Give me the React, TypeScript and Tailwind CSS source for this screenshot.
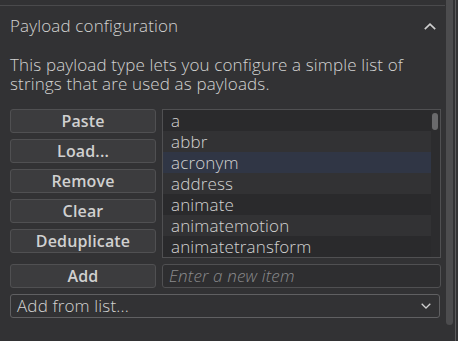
import React from 'react';

const items = ['a', 'abbr', 'acronym', 'address', 'animate', 'animatemotion', 'animatetransform'];
const buttons = ['Paste', 'Load...', 'Remove', 'Clear', 'Deduplicate'];

const btn = 'h-6 w-[146px] rounded-[3px] border border-[#505052] bg-[#3c3c3e] text-[16px] font-semibold leading-none text-[#d0d0d0] flex items-center justify-center';

export default function App() {
  return (
    <div className="relative h-[341px] w-[458px] overflow-hidden bg-[#323234] font-['Open_Sans',sans-serif] tracking-[0.15px] text-[#d2d2d2]">
      <div className="flex h-full">
        <div className="flex w-[446px] flex-col">
          <div className="mt-[5px] h-px w-[445px] bg-[#4a4a4c]" />
          <div className="flex h-[40px] items-center justify-between pl-[10px] pr-[10px]">
            <span className="text-[17px] font-light">Payload configuration</span>
            <svg width="12" height="7" viewBox="0 0 12 7" fill="none" stroke="#d0d0d0" strokeWidth="1.6">
              <path d="M0.8 6.2 L6 1.2 L11.2 6.2" />
            </svg>
          </div>
          <p className="mt-[9px] pl-[10px] pr-[20px] text-[17px] font-light leading-[19px]">
            This payload type lets you configure a simple list of strings that are used as payloads.
          </p>
          <div className="mt-[16px] flex gap-[6px] pl-[10px]">
            <div className="flex flex-col gap-[6px]">
              {buttons.map(b => <button key={b} className={btn}>{b}</button>)}
            </div>
            <div className="relative h-[149px] w-[279px] border border-[#505052] bg-[#2c2c2e]">
              <ul className="w-[268px]">
                {items.map((it, i) => (
                  <li key={it} className={`flex h-[21px] items-center px-[8px] text-[17px] font-light ${i === 2 ? 'bg-[#303645]' : i % 2 === 0 ? 'bg-[#2a2a2c]' : 'bg-[#323234]'}`}>
                    {it}
                  </li>
                ))}
              </ul>
              <div className="absolute right-[2px] top-[3px] h-[17px] w-[6px] rounded-full bg-[#6a6a6c]" />
            </div>
          </div>
          <div className="mt-[6px] flex gap-[6px] pl-[10px]">
            <button className={btn}>Add</button>
            <input
              placeholder="Enter a new item"
              className="h-6 w-[279px] rounded-[3px] border border-[#505052] bg-[#2e2e30] px-[6px] text-[17px] font-light italic text-[#d2d2d2] outline-none placeholder:text-[#8a8a8c]"
            />
          </div>
          <div className="ml-[10px] mt-[6px] flex h-6 w-[430px] items-center justify-between rounded-[3px] border border-[#606062] bg-[#323234] pl-[6px] pr-[8px]">
            <span className="text-[17px] font-light">Add from list...</span>
            <svg width="10" height="6" viewBox="0 0 10 6" fill="none" stroke="#cfcfcf" strokeWidth="1.3">
              <path d="M0.7 0.8 L5 5 L9.3 0.8" />
            </svg>
          </div>
        </div>
        <div className="flex w-[12px]">
          <div className="mt-0 h-[325px] w-[7px] rounded-b-full bg-[#4c4c4e]" />
          <div className="w-[2px]" />
          <div className="w-px bg-[#5a5a5c]" />
        </div>
      </div>
    </div>
  );
}
